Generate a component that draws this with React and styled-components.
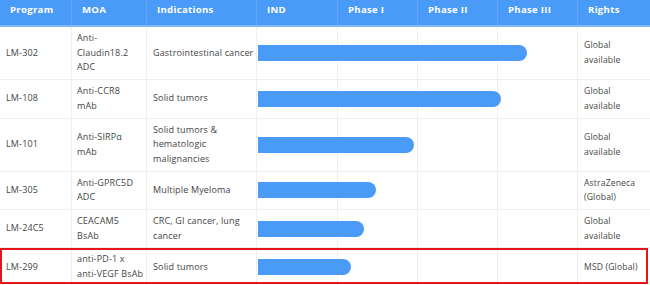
import React from "react";
import styled, { createGlobalStyle } from "styled-components";

const Global = createGlobalStyle`
  html, body { margin: 0; padding: 0; background: #fff; }
  body { overflow: hidden; font-family: "Open Sans", "Noto Sans", sans-serif; }
  * { box-sizing: border-box; }
`;

const COLS = "72px 75px 110px 81px 80px 80px 80px 72px";
const LINE = "#efefef";
const BLUE = "#4a9bf8";

const Table = styled.div`
  width: 650px;
  display: flex;
  flex-direction: column;
`;

const HeaderRow = styled.div`
  display: grid;
  grid-template-columns: ${COLS};
  background: ${BLUE};
  border-bottom: 2px solid #80baf9;
  height: 27px;
`;

const HeadCell = styled.div`
  padding: 3px 9px 0 10px;
  color: #fff;
  font-weight: 700;
  font-size: 9.6px;
  letter-spacing: 0.3px;
  line-height: 14px;
  border-right: 1px solid ${(p) => (p.$last ? "transparent" : "rgba(255,255,255,0.12)")};
  white-space: nowrap;
`;

const Row = styled.div`
  position: relative;
  display: grid;
  grid-template-columns: ${COLS};
  border-bottom: 1px solid ${LINE};
  ${(p) =>
    p.$highlight &&
    `
    &::after {
      content: "";
      position: absolute;
      left: 0;
      top: 0;
      right: 2px;
      bottom: 2px;
      border: 2px solid #e8141a;
      pointer-events: none;
    }
  `}
`;

const Cell = styled.div`
  display: flex;
  align-items: center;
  padding: 4px ${(p) => (p.$tight ? "5px" : "6px")};
  font-size: ${(p) => (p.$small ? "8.6px" : "9px")};
  letter-spacing: 0.15px;
  line-height: 14.7px;
  color: #454545;
  border-right: 1px solid ${(p) => (p.$last ? "transparent" : LINE)};
  white-space: nowrap;
`;

const Track = styled.div`
  grid-column: 4 / 8;
  display: flex;
  align-items: center;
  border-right: 1px solid ${LINE};
  background-image: linear-gradient(
    to right,
    transparent 80px,
    ${LINE} 80px,
    ${LINE} 81px,
    transparent 81px,
    transparent 160px,
    ${LINE} 160px,
    ${LINE} 161px,
    transparent 161px,
    transparent 240px,
    ${LINE} 240px,
    ${LINE} 241px,
    transparent 241px
  );
`;

const Bar = styled.div`
  height: 16px;
  background: ${BLUE};
  border-radius: 0 8px 8px 0;
  margin-left: 1px;
`;

const Lines = ({ lines }) => (
  <span>
    {lines.map((l, i) => (
      <React.Fragment key={i}>
        {i > 0 && <br />}
        {l}
      </React.Fragment>
    ))}
  </span>
);

const headers = ["Program", "MOA", "Indications", "IND", "Phase I", "Phase II", "Phase III", "Rights"];

const rows = [
  { p: "LM-302", moa: ["Anti-", "Claudin18.2", "ADC"], ind: ["Gastrointestinal cancer"], bar: 269, rights: ["Global", "available"] },
  { p: "LM-108", moa: ["Anti-CCR8", "mAb"], ind: ["Solid tumors"], bar: 243, rights: ["Global", "available"] },
  { p: "LM-101", moa: ["Anti-SIRPα", "mAb"], ind: ["Solid tumors &", "hematologic", "malignancies"], bar: 156, rights: ["Global", "available"] },
  { p: "LM-305", moa: ["Anti-GPRC5D", "ADC"], ind: ["Multiple Myeloma"], bar: 118, rights: ["AstraZeneca", "(Global)"] },
  { p: "LM-24C5", moa: ["CEACAM5", "BsAb"], ind: ["CRC, GI cancer, lung", "cancer"], bar: 106, rights: ["Global", "available"] },
  { p: "LM-299", moa: ["anti-PD-1 x", "anti-VEGF BsAb"], ind: ["Solid tumors"], bar: 93, rights: ["MSD (Global)"], highlight: true },
];

export default function App() {
  return (
    <>
      <Global />
      <Table>
        <HeaderRow>
          {headers.map((h, i) => (
            <HeadCell key={h} $last={i === headers.length - 1}>
              {h}
            </HeadCell>
          ))}
        </HeaderRow>
        {rows.map((r) => (
          <Row key={r.p} $highlight={r.highlight}>
            <Cell>{r.p}</Cell>
            <Cell $tight>
              <Lines lines={r.moa} />
            </Cell>
            <Cell>
              <Lines lines={r.ind} />
            </Cell>
            <Track>
              <Bar style={{ width: r.bar }} />
            </Track>
            <Cell $last $small>
              <Lines lines={r.rights} />
            </Cell>
          </Row>
        ))}
      </Table>
    </>
  );
}
